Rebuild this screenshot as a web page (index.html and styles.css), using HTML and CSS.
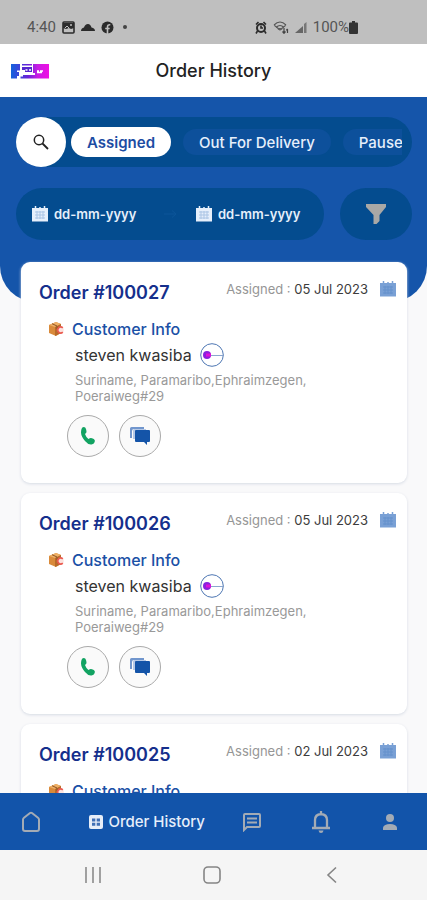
FILE: index.html
```html
<!DOCTYPE html>
<html lang="en">
<head>
<meta charset="utf-8">
<meta name="viewport" content="width=device-width, initial-scale=1">
<title>Order History</title>
<link rel="stylesheet" href="styles.css">
</head>
<body>
<svg class="defs" aria-hidden="true">
  <defs>
    <linearGradient id="brand"><stop offset="0" stop-color="#1263dc"/><stop offset=".45" stop-color="#6a22d8"/><stop offset=".7" stop-color="#c81ce4"/><stop offset="1" stop-color="#f010e4"/></linearGradient>
    <symbol id="calendar" viewBox="0 0 18 18">
      <path d="M1 3h16v13.500H1z" fill="currentColor"/>
      <path d="M4.500 1v4M13.500 1v4M9 2v2" stroke="currentColor" stroke-width="1.500"/>
      <path d="M4 7h10M4 10h10M4 13h10M6 6v8M9 6v8M12 6v8" stroke="#3e76bd" stroke-width="1" opacity=".35"/>
    </symbol>
    <symbol id="parcel" viewBox="0 0 16 16">
      <path d="M1 4l7-3 5 2v9l-5 3-7-3z" fill="#d98a3a"/>
      <path d="M1 4l7-3 5 2-6 3z" fill="#eeb066"/>
      <path d="M7 6l6-3v9l-6 3z" fill="#b86a2a"/>
      <path d="M4 2.700l5 2.300v3" stroke="#8d5426" stroke-width="1" fill="none"/>
      <circle cx="12.800" cy="9" r="3" fill="#fbe3df"/>
      <path d="M14.800 6.800a3 3 0 1 0 0 4.400" fill="none" stroke="#ea5a50" stroke-width="1.600"/>
    </symbol>
    <symbol id="phone" viewBox="0 0 16 20">
      <path d="M1.500 3Q2 1 3.800 1 5.500 1 6 3L6.500 5.200Q6.800 6.800 5 8q.800 2.800 3.500 5 1.800-1.500 3.500-.800l1.800.900q1.600 1 .900 2.800-.800 2.300-3.200 2.600Q8 18.800 5 15 1.200 10.500 1 6.500 1 4.500 1.500 3z" fill="#12a362"/>
    </symbol>
    <symbol id="chat" viewBox="0 0 22 20">
      <path d="M1 12V2.500Q1 1 2.500 1H15v2H5Q3 3 3 5v7z" fill="#7196cd"/>
      <path d="M4 13V4.500Q4 3 5.500 3H17v2H6v8z" fill="#b5c8e6"/>
      <path d="M7 4h13q1 0 1 1v10q0 1-1 1h-2v3l-3-3H7q-1 0-1-1V5q0-1 1-1z" fill="#1454a8"/>
    </symbol>
  </defs>
</svg>

<header class="status">
  <div class="status-group">
    <span>4:40</span>
    <svg width="13" height="13" viewBox="0 0 13 13"><rect x="1" y="1" width="11" height="11" rx="1" fill="none" stroke="#2b2b2b" stroke-width="1.600"/><path d="M1 2h11v5L9 8 7 7 4 8 1 7z" fill="#2b2b2b"/><path d="M3 7l2-2 2 2" fill="none" stroke="#bfbfbf"/><circle cx="9" cy="4" r="1" fill="#bfbfbf"/></svg>
    <svg width="14" height="13" viewBox="0 0 14 13"><path d="M0 10q0-3 3-3.500Q4 3 7 3q2.500 0 3.500 3.500Q14 7 14 10z" fill="#2b2b2b"/></svg>
    <svg width="13" height="13" viewBox="0 0 13 13"><circle cx="6.500" cy="6.500" r="6" fill="#2b2b2b"/><path d="M6.500 13V6q0-2.500 2.800-2.300M4.200 7.500h4.500" fill="none" stroke="#bfbfbf" stroke-width="1.600"/></svg>
    <span class="dot"></span>
  </div>
  <div class="status-group status-right">
    <svg width="12" height="13" viewBox="0 0 12 13"><circle cx="6" cy="7" r="4" fill="none" stroke="#2b2b2b" stroke-width="2"/><path d="M1 3.500L3.500 1M11 3.500L8.500 1M2.500 10L1 12.500M9.500 10l1.500 2.500M6 4.500V7h2" fill="none" stroke="#2b2b2b" stroke-width="1.600"/></svg>
    <svg width="16" height="13" viewBox="0 0 16 13"><path d="M1 4q6-6 12 0M3 6.500q4-4 8 0M5 8.500q2-2 4 0M1 4l6 5 6-5" fill="none" stroke="#555" stroke-width="1.100"/><path d="M11 7v5M9.500 10.500L11 12.300l1.500-1.800M14.500 12V8M13.300 9.300l1.200-1.500" fill="none" stroke="#444" stroke-width="1.200"/></svg>
    <svg width="12" height="13" viewBox="0 0 12 13"><path d="M0 12L8 5v7z" fill="#666"/><path d="M9 12V3l2.500-2v11z" fill="#777"/></svg>
    <span>100%</span>
    <svg class="battery" width="9" height="13" viewBox="0 0 9 13"><path d="M3 0h3v1.500h2q1 0 1 1V12q0 1-1 1H1q-1 0-1-1V2.500q0-1 1-1h2z" fill="#333"/></svg>
  </div>
</header>

<header class="appbar">
  <svg class="logo" width="38" height="16" viewBox="0 0 38 16" role="img" aria-label="Logo"><path d="M0 1h38v14.500H0z" fill="url(#brand)"/><path d="M9 0h2v2.500h10V0h1v10h2v2H12v1.500H9.500V16H6v-3h2V9H6V7.500h3z" fill="#fff"/><path d="M11 4h10v5h-7V7h-3z" fill="#5526cf"/><path d="M10.500 8h3M14.500 7h2M18 7h2M26 8h2M29 8h3M26 9.500h5" stroke="#fff" stroke-width="1.400"/></svg>
  <h1>Order History</h1>
</header>

<main>
  <section class="hero">
    <div class="filters">
      <button class="search" aria-label="Search"><svg width="18" height="18" viewBox="0 0 18 18"><circle cx="7" cy="7" r="4.700" fill="none" stroke="#222" stroke-width="1.500"/><path d="M10.500 10.500L16 16" stroke="#222" stroke-width="1.800"/></svg></button>
      <div class="chips">
        <button class="chip active">Assigned</button>
        <button class="chip">Out For Delivery</button>
        <button class="chip">Paused</button>
      </div>
    </div>
    <div class="range">
      <div class="dates">
        <label class="date"><svg width="18" height="18"><use href="#calendar"/></svg><input type="text" placeholder="dd-mm-yyyy" aria-label="From date"></label>
        <svg class="arrow" width="14" height="10" viewBox="0 0 14 10"><path d="M1 5h12M9 1.500L13 5 9 8.500" fill="none" stroke="#0c5599"/></svg>
        <label class="date"><svg width="18" height="18"><use href="#calendar"/></svg><input type="text" placeholder="dd-mm-yyyy" aria-label="To date"></label>
      </div>
      <button class="funnel" aria-label="Filter"><svg width="22" height="22" viewBox="0 0 22 22"><path d="M1 1h20v3l-6.500 8v6l-3 3h-3v-9L1 4z" fill="#a9a8a6"/></svg></button>
    </div>
  </section>

  <section class="orders">
    <article class="card">
      <div class="card-head"><h2>Order #100027</h2><p class="assigned">Assigned : <time datetime="2023-07-05">05 Jul 2023</time></p><svg class="cal" width="18" height="18"><use href="#calendar"/></svg></div>
      <h3><svg width="16" height="16"><use href="#parcel"/></svg>Customer Info</h3>
      <div class="details">
        <p class="name">steven kwasiba <svg width="24" height="24" viewBox="0 0 24 24"><circle cx="12" cy="12" r="11.300" fill="#fff" stroke="#4e77b3"/><path d="M10 12.500h13" stroke="#8ba6cf"/><circle cx="7" cy="12" r="4" fill="#8a22dc"/><path d="M6 12h5" stroke="#e010d8" stroke-width="3"/></svg></p>
        <p class="address">Suriname, Paramaribo,Ephraimzegen, Poeraiweg#29</p>
      </div>
      <div class="actions"><button aria-label="Call"><svg width="16" height="20"><use href="#phone"/></svg></button><button aria-label="Chat"><svg width="22" height="20"><use href="#chat"/></svg></button></div>
    </article>
    <article class="card">
      <div class="card-head"><h2>Order #100026</h2><p class="assigned">Assigned : <time datetime="2023-07-05">05 Jul 2023</time></p><svg class="cal" width="18" height="18"><use href="#calendar"/></svg></div>
      <h3><svg width="16" height="16"><use href="#parcel"/></svg>Customer Info</h3>
      <div class="details">
        <p class="name">steven kwasiba <svg width="24" height="24" viewBox="0 0 24 24"><circle cx="12" cy="12" r="11.300" fill="#fff" stroke="#4e77b3"/><path d="M10 12.500h13" stroke="#8ba6cf"/><circle cx="7" cy="12" r="4" fill="#8a22dc"/><path d="M6 12h5" stroke="#e010d8" stroke-width="3"/></svg></p>
        <p class="address">Suriname, Paramaribo,Ephraimzegen, Poeraiweg#29</p>
      </div>
      <div class="actions"><button aria-label="Call"><svg width="16" height="20"><use href="#phone"/></svg></button><button aria-label="Chat"><svg width="22" height="20"><use href="#chat"/></svg></button></div>
    </article>
    <article class="card">
      <div class="card-head"><h2>Order #100025</h2><p class="assigned">Assigned : <time datetime="2023-07-02">02 Jul 2023</time></p><svg class="cal" width="18" height="18"><use href="#calendar"/></svg></div>
      <h3><svg width="16" height="16"><use href="#parcel"/></svg>Customer Info</h3>
    </article>
  </section>
</main>

<nav class="tabs" aria-label="Main">
  <a href="#home" aria-label="Home"><svg width="20" height="22" viewBox="0 0 20 22"><path d="M2 8.500Q2 7.500 3 6.700L9 2q1-.700 2 0l6 4.700q1 .800 1 1.800V18q0 2-2 2H4q-2 0-2-2z" fill="none" stroke="#a3abb5" stroke-width="2"/></svg></a>
  <a class="current" href="#history" aria-current="page"><svg width="14" height="14" viewBox="0 0 14 14"><rect width="14" height="14" rx="2" fill="#e6edf8"/><path d="M3 3.500h3.300v3H3zM7.700 3.500H11v3H7.700zM3 7.700h3.300v3H3zM7.700 7.700H11v3H7.700z" fill="#3f6fb5"/></svg>Order History</a>
  <a href="#messages" aria-label="Messages"><svg width="20" height="20" viewBox="0 0 20 20"><path d="M2 18V3q0-1 1-1h14q1 0 1 1v11q0 1-1 1H5zM5 6.500h10M5 10.500h10" fill="none" stroke="#a3abb5" stroke-width="2"/></svg></a>
  <a href="#alerts" aria-label="Notifications"><svg width="20" height="24" viewBox="0 0 20 24"><path d="M1 18h18M4 18v-8q0-5.500 6-6 6 .500 6 6v8M10 1v3" fill="none" stroke="#a3abb5" stroke-width="2.300"/><path d="M7.500 20.500h5q-.500 2.500-2.500 2.500t-2.500-2.500z" fill="#a3abb5"/></svg></a>
  <a href="#profile" aria-label="Profile"><svg width="16" height="18" viewBox="0 0 16 18"><circle cx="8" cy="5" r="4" fill="#a3abb5"/><path d="M1 17v-2.500Q2 11 8 11t7 3.500V17z" fill="#a3abb5"/></svg></a>
</nav>

<footer class="system">
  <button aria-label="Recent apps"><svg width="18" height="18" viewBox="0 0 18 18"><path d="M2 1v16M9 1v16M16 1v16" stroke="#8c8c8c" stroke-width="1.600"/></svg></button>
  <button aria-label="Home screen"><svg width="18" height="18" viewBox="0 0 18 18"><rect x="1" y="1" width="16" height="16" rx="4" fill="none" stroke="#858585" stroke-width="1.600"/></svg></button>
  <button aria-label="Back"><svg width="18" height="18" viewBox="0 0 18 18"><path d="M13 1.500L5 9l8 7.500" fill="none" stroke="#858585" stroke-width="1.600"/></svg></button>
</footer>
</body>
</html>
```
FILE: styles.css
```css
* { box-sizing: border-box; }

body {
  margin: 0;
  height: 100vh;
  display: flex;
  flex-direction: column;
  overflow: hidden;
  background: #f9f9fa;
  color: #222;
  font-family: Inter, Roboto, sans-serif;
  font-size: 16px;
}

h1, h2, h3, p { margin: 0; font-weight: 500; }
button { border: 0; padding: 0; background: none; font: inherit; color: inherit; }
svg { display: block; flex: none; }
.defs { position: absolute; width: 0; height: 0; }

.status {
  flex: none;
  display: flex;
  justify-content: space-between;
  padding: 17px 69px 7px 27px;
  background: #bfbfbf;
  color: #555;
  font-family: Roboto, sans-serif;
  font-size: 15px;
  line-height: 20px;
}
.status-group { display: flex; align-items: center; gap: 6px; }
.dot { width: 4px; height: 4px; margin-left: 3px; border-radius: 50%; background: #444; }
.battery { margin-left: -6px; }

.appbar {
  flex: none;
  display: grid;
  grid-template-columns: 1fr auto 1fr;
  align-items: center;
  height: 53px;
  padding: 0 11px;
  background: #fff;
}
.appbar h1 { font-size: 18px; line-height: 24px; }

main { flex: 1; min-height: 0; overflow: hidden; }

.hero {
  padding: 20px 15px 62px 16px;
  background: #1555aa;
  border-radius: 0 0 36px 36px;
  color: #e6effb;
}
.filters {
  display: flex;
  align-items: center;
  gap: 5px;
  padding-right: 10px;
  border-radius: 25px;
  background: #044c8f;
}
.search {
  flex: none;
  display: grid;
  place-items: center;
  width: 50px;
  height: 50px;
  border-radius: 50%;
  background: #fff;
}
.chips { display: flex; align-items: center; gap: 12px; min-width: 0; overflow: hidden; }
.chip {
  flex: none;
  height: 26px;
  padding: 0 16px;
  border-radius: 13px;
  background: #0d509b;
  font-size: 15px;
  font-weight: 500;
}
.chip.active { height: 30px; border-radius: 15px; background: #fff; color: #1c4ca3; font-weight: 600; }

.range { display: flex; gap: 16px; margin-top: 21px; }
.dates {
  flex: 1;
  min-width: 0;
  display: flex;
  align-items: center;
  justify-content: space-between;
  height: 52px;
  padding: 0 16px 0 15px;
  border-radius: 26px;
  background: #044c8f;
}
.date { display: flex; align-items: center; gap: 5px; }
.date input {
  width: 90px;
  padding: 0;
  border: 0;
  background: none;
  color: inherit;
  font: 600 13px/20px Inter, sans-serif;
}
.date input::placeholder { color: #e6effb; opacity: 1; }
.funnel { display: grid; place-items: center; width: 72px; border-radius: 26px; background: #044c8f; }

.orders { display: grid; gap: 10px; margin-top: -40px; padding: 0 20px 0 21px; position: relative; }
.card {
  min-height: 221px;
  padding: 18px 10px 24px 18px;
  border-radius: 9px;
  background: #fff;
  box-shadow: 0 1px 3px #d6dbe4;
}
.card-head { display: flex; align-items: flex-start; }
.card h2 { flex: 1; color: #152f8c; font-size: 18px; font-weight: 600; line-height: 26px; }
.assigned { color: #969696; font-size: 13px; line-height: 18px; font-weight: 400; }
.assigned time { color: #3c3c3c; }
.cal { margin-left: 11px; color: #79a0d5; }
.card h3 {
  display: flex;
  align-items: center;
  gap: 8px;
  margin-top: 12px;
  padding-left: 9px;
  color: #1a50a6;
  font-size: 16px;
  line-height: 22px;
}
.details { padding-left: 36px; }
.name { display: flex; align-items: center; gap: 8px; margin-top: 3px; line-height: 24px; font-weight: 400; color: #333; }
.address { max-width: 260px; margin-top: 5px; color: #999; font-size: 13px; line-height: 16px; font-weight: 400; }
.actions { display: flex; gap: 10px; margin-top: 11px; padding-left: 28px; }
.actions button {
  display: grid;
  place-items: center;
  width: 42px;
  height: 42px;
  border: 1px solid #aaa;
  border-radius: 50%;
  background: #fafafa;
}

.tabs {
  flex: none;
  display: grid;
  grid-template-columns: 62px 1fr 69px 69px 69px;
  align-items: center;
  justify-items: center;
  height: 57px;
  padding-right: 3px;
  background: #1254aa;
}
.tabs a { color: #e6effb; text-decoration: none; }
.tabs .current { display: flex; align-items: center; justify-self: end; gap: 5px; padding-right: 12px; font-size: 15px; font-weight: 500; }

.system {
  flex: none;
  display: flex;
  align-items: center;
  justify-content: space-around;
  height: 50px;
  padding: 0 35px 0 33px;
  background: #f5f5f5;
}
```
